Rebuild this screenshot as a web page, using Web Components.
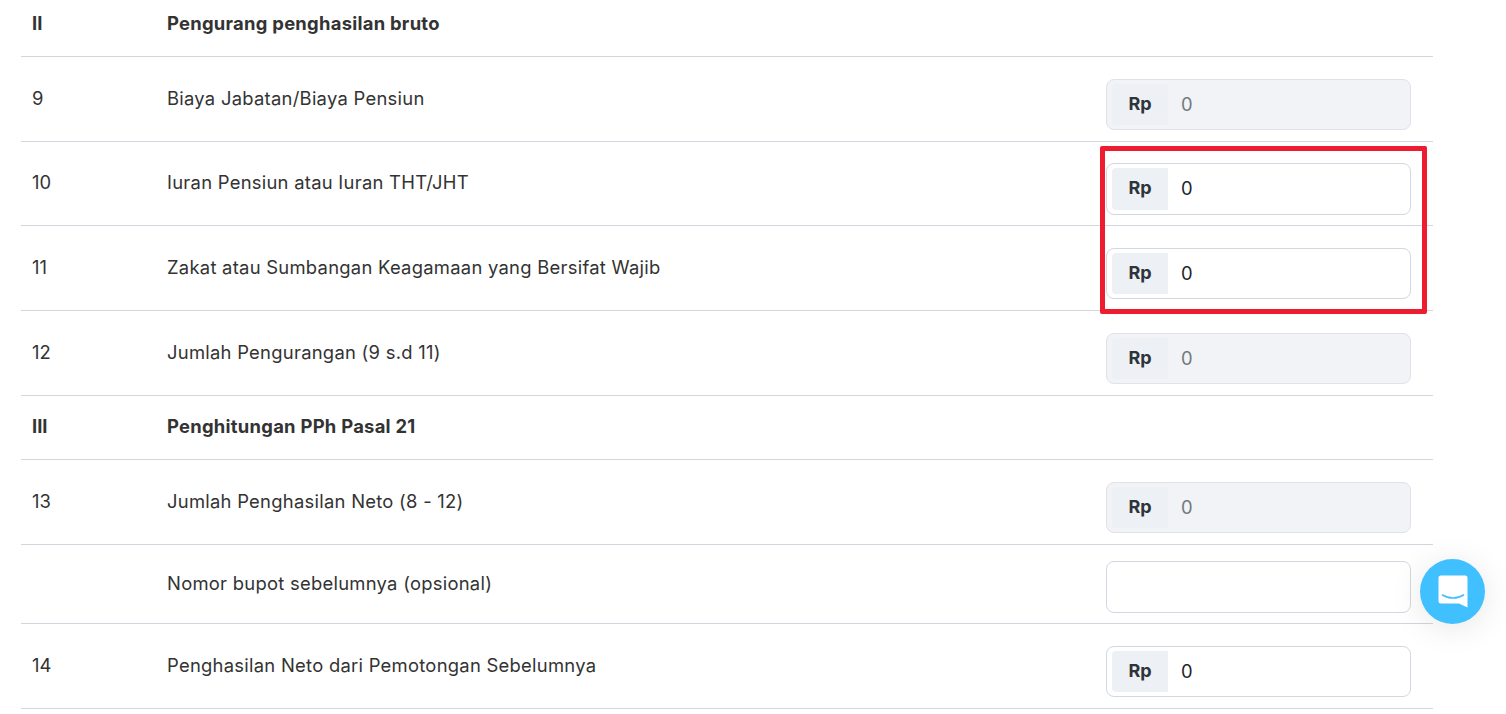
<!DOCTYPE html>
<html lang="id"><head><meta charset="utf-8"><title>PPh 21</title>
<style>
html,body{margin:0;background:#fff;height:714px;overflow:hidden}
body{font-family:Inter,"Noto Sans",sans-serif;color:#333;position:relative}
</style></head><body>
<tax-table>
  <tax-row kind="head" first num="II" label="Pengurang penghasilan bruto"></tax-row>
  <tax-row num="9" label="Biaya Jabatan/Biaya Pensiun"><rp-input disabled></rp-input></tax-row>
  <tax-row num="10" label="Iuran Pensiun atau Iuran THT/JHT" style="--h:84px;--pt:28px;--it:21px;--ih:52px;--pb:2px"><rp-input></rp-input></tax-row>
  <tax-row num="11" label="Zakat atau Sumbangan Keagamaan yang Bersifat Wajib"><rp-input></rp-input></tax-row>
  <tax-row num="12" label="Jumlah Pengurangan (9 s.d 11)"><rp-input disabled></rp-input></tax-row>
  <tax-row kind="head" num="III" label="Penghitungan PPh Pasal 21"></tax-row>
  <tax-row num="13" label="Jumlah Penghasilan Neto (8 - 12)"><rp-input disabled></rp-input></tax-row>
  <tax-row num="" label="Nomor bupot sebelumnya (opsional)" style="--h:79px;--pt:26px;--it:16px"><rp-input plain></rp-input></tax-row>
  <tax-row num="14" label="Penghasilan Neto dari Pemotongan Sebelumnya"><rp-input></rp-input></tax-row>
</tax-table>
<red-mark></red-mark>
<chat-launcher></chat-launcher>
<script>
customElements.define('tax-table', class extends HTMLElement{
  constructor(){super();this.attachShadow({mode:'open'}).innerHTML=`<style>:host{display:block;margin:0 73px 0 21px}</style><slot></slot>`;}
});
customElements.define('tax-row', class extends HTMLElement{
  connectedCallback(){
    if(this.shadowRoot) return;
    const head=this.getAttribute('kind')==='head', first=this.hasAttribute('first');
    const h=first?'57px':head?'64px':'var(--h,85px)';
    this.attachShadow({mode:'open'}).innerHTML=`<style>
      :host{display:grid;grid-template-columns:146px 1fr 327px;box-sizing:border-box;height:${h};border-bottom:1px solid #d3d6df;
        font:${head?700:400} 18.4px/24px Inter,"Noto Sans",sans-serif;color:#333;letter-spacing:.27px}
      .n{padding:${first?'11px':head?'18px':'var(--pt,29px)'} 0 0 11px;letter-spacing:0}
      .l{padding-top:${first?'11px':head?'18px':'var(--pt,29px)'}}
      .i{padding-top:var(--it,22px)}
    </style><div class="n"></div><div class="l"></div><div class="i"><slot></slot></div>`;
    this.shadowRoot.querySelector('.n').textContent=this.getAttribute('num');
    this.shadowRoot.querySelector('.l').textContent=this.getAttribute('label');
  }
});
customElements.define('rp-input', class extends HTMLElement{
  connectedCallback(){
    if(this.shadowRoot) return;
    const dis=this.hasAttribute('disabled'), plain=this.hasAttribute('plain');
    this.attachShadow({mode:'open'}).innerHTML=`<style>
      :host{display:flex;box-sizing:border-box;width:305px;height:${plain?'52px':'var(--ih,51px)'};border:1px solid ${dis?'#dfe2e7':'#d3d7df'};border-radius:8px;
        background:${dis?'#f1f3f6':'#fff'};padding:4px 5px;align-items:stretch;font:400 18.4px/24px Inter,sans-serif;letter-spacing:0}
      .rp{width:56px;background:#edf0f4;border-radius:4px 0 0 4px;display:flex;align-items:center;justify-content:center;font-weight:700;font-size:18px;color:#2f333a;box-sizing:border-box;padding-bottom:var(--pb,1px)}
      .v{margin-left:13px;display:flex;align-items:center;padding-bottom:var(--pb,1px);color:${dis?'#72787f':'#212529'}}
    </style>${plain?'':'<span class="rp">Rp</span><span class="v">0</span>'}`;
  }
});
customElements.define('red-mark', class extends HTMLElement{
  constructor(){super();this.attachShadow({mode:'open'}).innerHTML=`<style>:host{position:absolute;left:1100px;top:146px;width:327px;height:168px;box-sizing:border-box;border:5px solid #ed1c2e;border-radius:2px;pointer-events:none}</style>`;}
});
customElements.define('chat-launcher', class extends HTMLElement{
  constructor(){super();this.attachShadow({mode:'open'}).innerHTML=`<style>
    :host{position:absolute;left:1420px;top:559px;width:65px;height:65px;border-radius:50%;background:#40c0ff;box-shadow:0 4px 32px rgba(0,0,0,.1);display:flex;align-items:center;justify-content:center}
    svg{display:block}
  </style><svg width="30" height="33" viewBox="0 0 30 33"><path fill="#fff" d="M3 .5h24a2.500 2.500 0 0 1 2.500 2.500v29.500l-8.500-4H3A2.500 2.500 0 0 1 .5 26V3A2.500 2.500 0 0 1 3 .5z"/><path fill="none" stroke="#40c0ff" stroke-width="1.6" stroke-linecap="round" d="M4.500 20c6 4 15 4 21 0"/></svg>`;}
});
</script>
</body></html>
